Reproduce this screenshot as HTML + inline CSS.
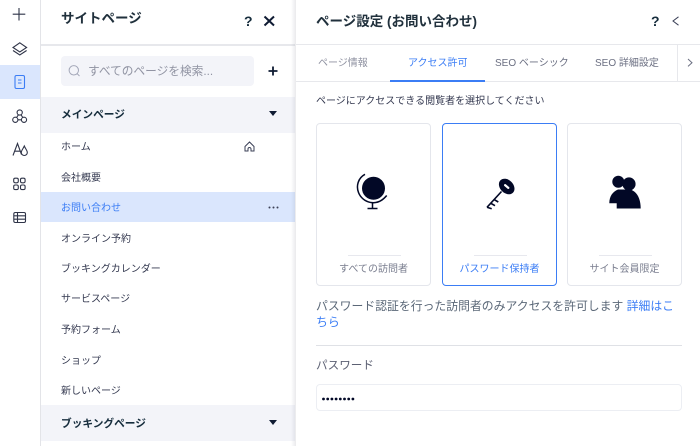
<!DOCTYPE html>
<html lang="ja"><head><meta charset="utf-8"><style>
*{box-sizing:border-box}
html,body{margin:0;padding:0;width:700px;height:446px;overflow:hidden;background:#fff}
body{font-family:"Liberation Sans","Noto Sans CJK JP",sans-serif;color:#3b4057;position:relative}
.a{position:absolute;white-space:nowrap}
.row{position:absolute;left:61px;font-size:10px;line-height:16px;color:#343950}
.hd{position:absolute;left:41px;width:254px;height:36px;background:#f3f4f9}
.hdt{position:absolute;left:61px;font-size:10.7px;font-weight:700;color:#162d3d;line-height:16px}
.card{position:absolute;top:123px;width:115px;height:163px;border:1px solid #e4e6ec;border-radius:4px;background:#fff}
.card i{position:absolute;left:31px;width:53px;top:131px;height:1px;background:#e7e8ee}
.card span{position:absolute;left:0;right:0;top:138px;text-align:center;font-size:10px;line-height:16px;color:#7a7e8f}
svg{position:absolute;overflow:visible}
.tab{position:absolute;top:56px;font-size:10px;line-height:16px;color:#6b6f82}
</style></head><body>
<div class="a" style="left:40px;top:0;width:1px;height:446px;background:#e3e4e8"></div>
<div class="a" style="left:0;top:65px;width:40px;height:34px;background:#dae6fd"></div>
<svg style="left:0;top:0" width="40" height="240" fill="none" stroke="#2f3448" stroke-width="1.1">
<path d="M19 8V20.5M12.7 14.2H25.3"/>
<path d="M19.8 42.8L26.6 47.5L19.8 52L13 47.5Z M13 50.5L19.8 55L26.6 50.5"/>
<rect x="15" y="75.5" width="9.5" height="13" rx="1.5" stroke="#3b7df5"/><path d="M18 80H21.5M18 83H21.5" stroke="#3b7df5"/>
<circle cx="19.7" cy="112.5" r="2.6"/><circle cx="15.3" cy="119.8" r="2.6"/><circle cx="24" cy="119.8" r="2.6"/><path d="M18.4 114.8L16.6 117.5M21 114.8L22.8 117.5M17.9 119.8H21.4"/>
<path d="M13 155.5L17.5 143.5L21.5 154.5M14.6 151.2H20.2"/><path d="M24.3 146C23 149 21.3 150.5 21.3 152.5A3 3 0 0 0 27.3 152.5C27.3 150.5 25.6 149 24.3 146Z"/>
<rect x="13.7" y="178.2" width="4.6" height="4.6" rx="1.5"/><rect x="20.5" y="178.2" width="4.6" height="4.6" rx="1.5"/><rect x="13.7" y="185" width="4.6" height="4.6" rx="1.5"/><rect x="20.5" y="185" width="4.6" height="4.6" rx="1.5"/>
<rect x="13.8" y="212.5" width="11.7" height="10" rx="1.5"/><path d="M13.8 215.8H25.5M13.8 219.2H25.5M17.5 212.5V222.5"/>
</svg>

<div class="a" style="left:61px;top:9px;font-size:13.5px;font-weight:700;line-height:20px;color:#20303c">サイトページ</div>
<div class="a" style="left:244px;top:12px;font-size:14px;font-weight:700;line-height:18px;color:#162d3d">?</div>
<svg style="left:264px;top:16px" width="11" height="10" fill="none" stroke="#0f1b33" stroke-width="2"><path d="M0.5 0.5L10 9.5M10 0.5L0.5 9.5"/></svg>
<div class="a" style="left:41px;top:44px;width:254px;height:2px;background:#e7e8ec"></div>

<div class="a" style="left:61px;top:56px;width:193px;height:30px;background:#f3f4f9;border-radius:4px"></div>
<svg style="left:68px;top:64px" width="14" height="14" fill="none" stroke="#a3a7b8" stroke-width="1"><circle cx="5.8" cy="6.3" r="4.7"/><path d="M9.3 9.8L11.5 12"/></svg>
<div class="a" style="left:88px;top:63px;font-size:11.7px;line-height:18px;color:#9194a3">すべてのページを検索...</div>
<svg style="left:268px;top:66px" width="10" height="10" stroke="#0f1b33" stroke-width="1.8"><path d="M5 0.5V9.5M0.5 5H9.5"/></svg>

<div class="hd" style="top:97px"></div>
<div class="hdt" style="top:107px">メインページ</div>
<svg style="left:269px;top:111px" width="8" height="5"><path d="M0 0H8L4 5Z" fill="#0f1b33"/></svg>
<div class="row" style="top:140px">ホーム</div>
<svg style="left:244px;top:141px" width="12" height="12" fill="none" stroke="#3b4057" stroke-width="1"><path d="M1 5.5L5.5 1L10 5.5V10H7V8A1.5 1.5 0 0 0 4 8V10H1Z"/></svg>
<div class="row" style="top:171px">会社概要</div>
<div class="a" style="left:41px;top:192px;width:254px;height:30px;background:#dae6fd"></div>
<div class="row" style="top:201px;color:#3b7df5">お問い合わせ</div>
<svg style="left:268px;top:206px" width="11" height="3" fill="#3b4057"><circle cx="1.5" cy="1.5" r="1"/><circle cx="5.5" cy="1.5" r="1"/><circle cx="9.5" cy="1.5" r="1"/></svg>
<div class="row" style="top:232px">オンライン予約</div>
<div class="row" style="top:262px">ブッキングカレンダー</div>
<div class="row" style="top:292px">サービスページ</div>
<div class="row" style="top:323px">予約フォーム</div>
<div class="row" style="top:354px">ショップ</div>
<div class="row" style="top:384px">新しいページ</div>
<div class="hd" style="top:405px"></div>
<div class="hdt" style="top:416px">ブッキングページ</div>
<svg style="left:269px;top:420px" width="8" height="5"><path d="M0 0H8L4 5Z" fill="#0f1b33"/></svg>

<div class="a" style="left:291px;top:0;width:5px;height:446px;background:linear-gradient(90deg,rgba(120,125,140,0),rgba(120,125,140,.16))"></div>
<div class="a" style="left:296px;top:0;width:404px;height:446px;background:#fff"></div>

<div class="a" style="left:316px;top:12px;font-size:13.5px;font-weight:700;line-height:20px;color:#20303c">ページ設定 (お問い合わせ)</div>
<div class="a" style="left:651px;top:12px;font-size:14px;font-weight:700;line-height:18px;color:#162d3d">?</div>
<svg style="left:672px;top:16px" width="8" height="10" fill="none" stroke="#3b4057" stroke-width="1"><path d="M6.5 0.8L1 5L6.5 9.2"/></svg>
<div class="a" style="left:296px;top:44px;width:404px;height:1px;background:#e7e8ec"></div>
<div class="tab" style="left:318px;color:#8f92a1">ページ情報</div>
<div class="tab" style="left:408px;color:#3b7df5">アクセス許可</div>
<div class="tab" style="left:495px">SEO ベーシック</div>
<div class="tab" style="left:595px">SEO 詳細設定</div>
<div class="a" style="left:677px;top:45px;width:1px;height:36px;background:#e7e8ec"></div>
<svg style="left:687px;top:58px" width="7" height="10" fill="none" stroke="#6b6f82" stroke-width="1"><path d="M1 1L5 4.7L1 8.4"/></svg>
<div class="a" style="left:296px;top:81px;width:404px;height:1px;background:#e7e8ec"></div>
<div class="a" style="left:390px;top:80px;width:95px;height:2px;background:#3b7df5"></div>
<div class="a" style="left:316px;top:94px;font-size:10px;line-height:16px;color:#343950">ページにアクセスできる閲覧者を選択してください</div>

<div class="card" style="left:316px"><i></i><span>すべての訪問者</span></div>
<div class="card" style="left:442px;border-color:#3b7df5"><i></i><span style="color:#3b7df5">パスワード保持者</span></div>
<div class="card" style="left:567px"><i></i><span>サイト会員限定</span></div>

<svg style="left:0;top:0" width="700" height="446">
<circle cx="373.5" cy="188.3" r="11.5" fill="#020826"/>
<path d="M365 174.3C358 178 356 186 358.5 192.5C362.5 203 377 207.5 386.7 195.5" fill="none" stroke="#020826" stroke-width="1.5"/>
<path d="M372.5 203V208.5M367.5 208.5H377.5" stroke="#020826" stroke-width="1.5" fill="none"/>

<ellipse cx="506.7" cy="186.5" rx="8.8" ry="6.6" fill="#020826" transform="rotate(45 506.7 186.5)"/>
<rect x="503.5" y="185.4" width="6.4" height="2.2" rx="1.1" fill="#fff" transform="rotate(40 506.7 186.5)"/>
<path d="M501.5 191.5L487 207.3M493.7 199.3L498.3 202M490.3 203L495 205.7M487 207.3L491.7 208.8" stroke="#020826" stroke-width="1.6" fill="none"/>

<g fill="#020826">
<circle cx="618.3" cy="181.7" r="6"/><circle cx="629" cy="184" r="6.6"/>
<path d="M609.3 203.3C609.3 196 613 191.5 618 189.5H630C636.5 191 640.7 198 640.7 208.5H616.7V203.3Z"/>
</g>
</svg>

<div class="a" style="left:316px;top:298px;font-size:11.85px;line-height:16px;color:#5b6878">パスワード認証を行った訪問者のみアクセスを許可します <span style="color:#3b7df5">詳細はこ</span></div>
<div class="a" style="left:316px;top:314px;font-size:11.85px;line-height:16px;color:#3b7df5">ちら</div>
<div class="a" style="left:316px;top:345px;width:366px;height:1px;background:#dfe1e6"></div>
<div class="a" style="left:316px;top:358px;font-size:11.6px;line-height:16px;color:#5c6073">パスワード</div>
<div class="a" style="left:316px;top:384px;width:366px;height:27px;border:1px solid #eceef3;border-radius:4px"></div>
<svg style="left:322px;top:397px" width="34" height="4" fill="#020826"><circle cx="1.5" cy="2" r="1.4"/><circle cx="5.7" cy="2" r="1.4"/><circle cx="9.9" cy="2" r="1.4"/><circle cx="14.1" cy="2" r="1.4"/><circle cx="18.3" cy="2" r="1.4"/><circle cx="22.5" cy="2" r="1.4"/><circle cx="26.7" cy="2" r="1.4"/><circle cx="30.9" cy="2" r="1.4"/></svg>
</body></html>
